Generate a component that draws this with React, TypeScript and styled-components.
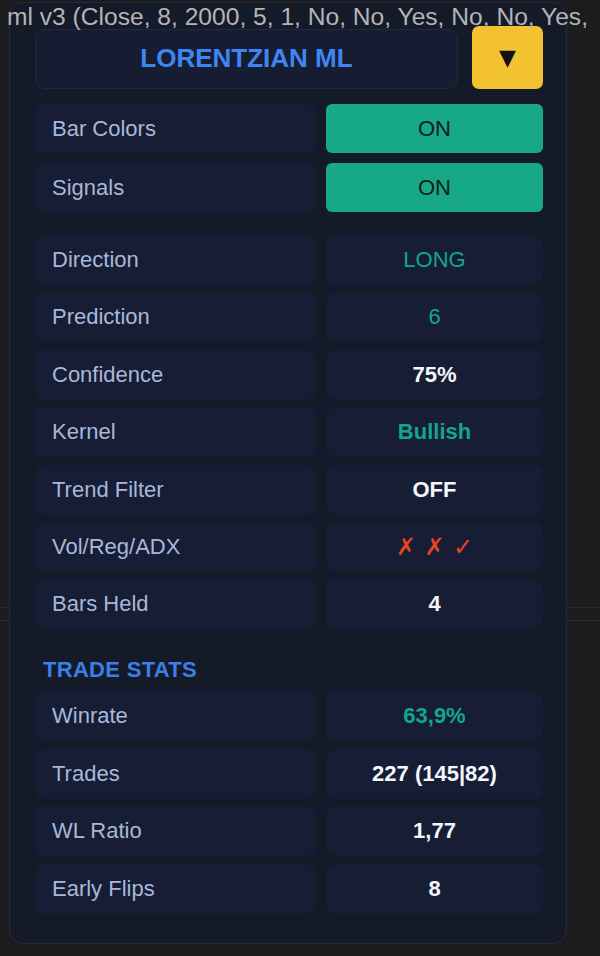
import styled, { createGlobalStyle } from "styled-components";

const GlobalStyle = createGlobalStyle`
  html, body {
    margin: 0;
    padding: 0;
    background-color: #1c1c1f;
    background-image:
      linear-gradient(to bottom, transparent 607px, #2a2a2d 607px, #2a2a2d 608px, transparent 608px),
      linear-gradient(to bottom, transparent 620px, #2a2a2d 620px, #2a2a2d 621px, transparent 621px);
    font-family: "Liberation Sans", Arial, sans-serif;
    overflow: hidden;
  }
  * { box-sizing: border-box; }
`;

type Row = { label: string; value: string; tone?: "teal" | "white" | "red"; light?: boolean };

const state: Row[] = [
  { label: "Direction", value: "LONG", tone: "teal", light: true },
  { label: "Prediction", value: "6", tone: "teal", light: true },
  { label: "Confidence", value: "75%" },
  { label: "Kernel", value: "Bullish", tone: "teal" },
  { label: "Trend Filter", value: "OFF" },
  { label: "Vol/Reg/ADX", value: "✗ ✗ ✓", tone: "red" },
  { label: "Bars Held", value: "4" },
];

const stats: Row[] = [
  { label: "Winrate", value: "63,9%", tone: "teal" },
  { label: "Trades", value: "227 (145|82)" },
  { label: "WL Ratio", value: "1,77" },
  { label: "Early Flips", value: "8" },
];

const App = () => {
  return (
    <Page>
      <GlobalStyle />
      <Legend>ml v3 (Close, 8, 2000, 5, 1, No, No, Yes, No, No, Yes,</Legend>
      <Panel>
        <Header>
          <TitleBox>LORENTZIAN ML</TitleBox>
          <MenuButton>▼</MenuButton>
        </Header>

        <Grid>
          <Label>Bar Colors</Label>
          <Toggle>ON</Toggle>
          <Label>Signals</Label>
          <Toggle>ON</Toggle>
        </Grid>

        <Grid tight>
          {state.map((r) => [
            <Label key={r.label}>{r.label}</Label>,
            <Value key={r.label + "v"} tone={r.tone} light={r.light}>
              {r.value}
            </Value>,
          ])}
        </Grid>

        <SectionTitle>TRADE STATS</SectionTitle>

        <Grid tight>
          {stats.map((r) => [
            <Label key={r.label}>{r.label}</Label>,
            <Value key={r.label + "v"} tone={r.tone} light={r.light}>
              {r.value}
            </Value>,
          ])}
        </Grid>
      </Panel>
    </Page>
  );
};

export default App;

const Page = styled.div`
  position: relative;
  width: 600px;
  height: 956px;
  padding: 2px 0 0 9px;
`;

const Legend = styled.div`
  position: absolute;
  top: 3px;
  left: 7px;
  white-space: nowrap;
  font-size: 24.6px;
  color: #b4b4b8;
  z-index: 2;
`;

const Panel = styled.div`
  width: 558px;
  background-color: #151a29;
  border: 1px solid #262b3d;
  border-radius: 14px;
  padding: 23px 23px 29px 25px;
  display: flex;
  flex-direction: column;
`;

const Header = styled.div`
  display: flex;
  align-items: center;
  gap: 14px;
  margin-bottom: 15px;
`;

const TitleBox = styled.div`
  flex: 1;
  height: 60px;
  margin-top: 2px;
  border-radius: 10px;
  background-color: #161d33;
  border: 1px solid #222a42;
  display: flex;
  align-items: center;
  justify-content: center;
  font-size: 26px;
  font-weight: 700;
  color: #3e86f2;
`;

const MenuButton = styled.div`
  width: 71px;
  height: 63px;
  border-radius: 7px;
  background-color: #f3c231;
  color: #111;
  display: flex;
  align-items: center;
  justify-content: center;
  font-size: 22px;
  font-family: "DejaVu Sans", sans-serif;
`;

const Grid = styled.div<{ tight?: boolean }>`
  display: grid;
  grid-template-columns: 281px 217px;
  grid-auto-rows: ${({ tight }) => (tight ? "50px" : "49px")};
  column-gap: 10px;
  row-gap: ${({ tight }) => (tight ? "7.4px" : "10px")};
  margin-bottom: ${({ tight }) => (tight ? "0" : "23px")};
`;

const Label = styled.div`
  background-color: #161d34;
  border-radius: 10px;
  display: flex;
  align-items: center;
  padding-left: 17px;
  font-size: 22px;
  color: #a8b8da;
`;

const Toggle = styled.div`
  background-color: #17a887;
  border-radius: 6px;
  display: flex;
  align-items: center;
  justify-content: center;
  font-size: 22px;
  color: #0b1f1a;
`;

const toneColor = (tone?: string) =>
  tone === "teal" ? "#14a58b" : tone === "red" ? "#e4451f" : "#f4f6fb";

const Value = styled.div<{ tone?: string; light?: boolean }>`
  background-color: #161d34;
  border-radius: 10px;
  display: flex;
  align-items: center;
  justify-content: center;
  font-size: ${({ tone }) => (tone === "red" ? "24px" : "22px")};
  font-weight: ${({ light }) => (light ? 400 : 700)};
  color: ${({ tone }) => toneColor(tone)};
  font-family: ${({ tone }) =>
    tone === "red" ? '"DejaVu Sans", sans-serif' : '"Liberation Sans", Arial, sans-serif'};
`;

const SectionTitle = styled.div`
  margin: 27px 0 7px 8px;
  height: 28px;
  display: flex;
  align-items: center;
  font-size: 22px;
  font-weight: 700;
  letter-spacing: 0.3px;
  color: #3b7fe7;
`;
